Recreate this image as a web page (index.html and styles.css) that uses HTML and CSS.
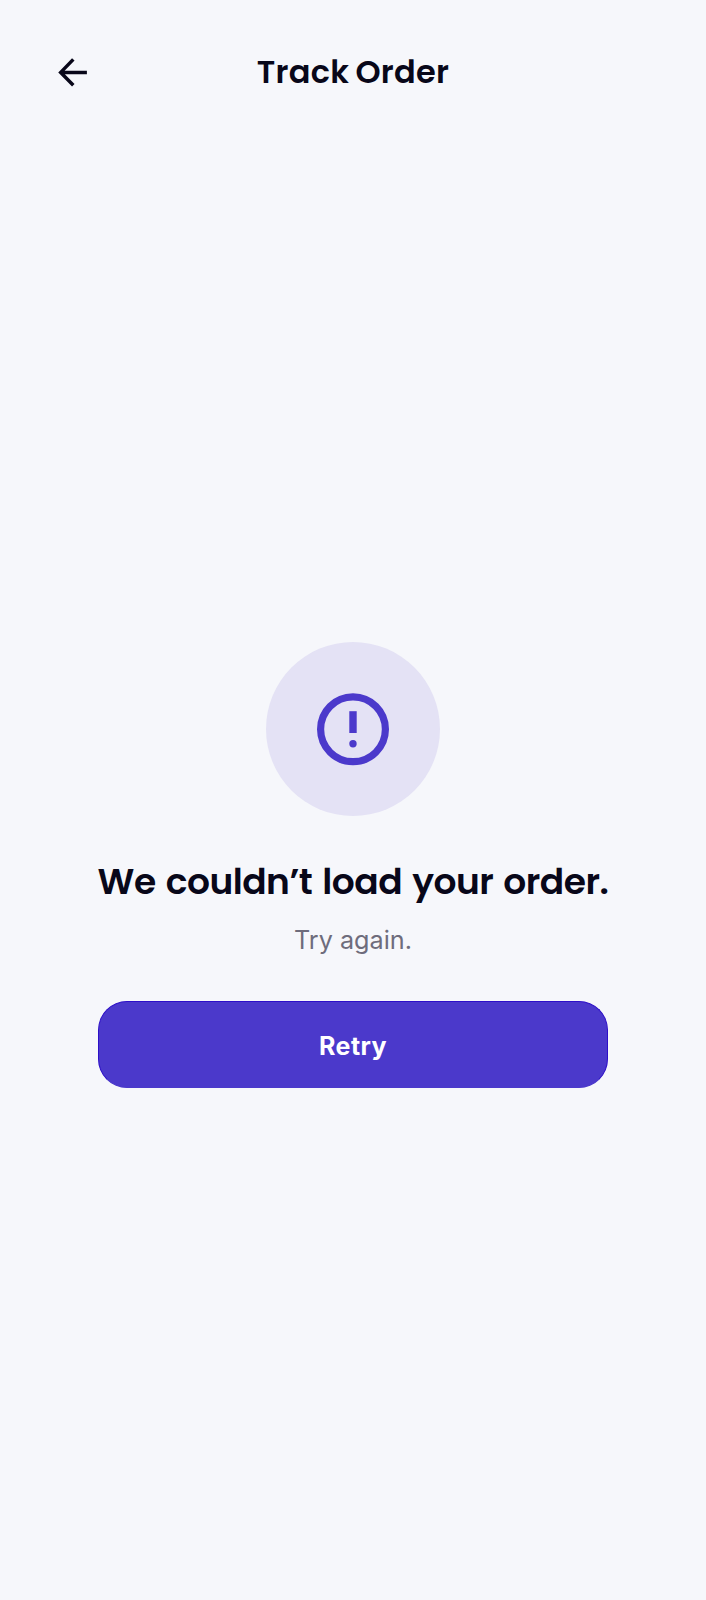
FILE: index.html
```html
<!DOCTYPE html>
<html lang="en">
<head>
<meta charset="utf-8">
<meta name="viewport" content="width=device-width, initial-scale=1">
<title>Track Order</title>
<link rel="stylesheet" href="styles.css">
</head>
<body>
<div class="screen">
  <header class="header">
    <button class="back" aria-label="Back">
      <svg width="32" height="32" viewBox="0 0 32 32" fill="none" stroke="currentColor" stroke-width="3.5"><path d="M17.3 3.4 4.7 16.4l12.6 12.8M4.7 16.4h26.2"/></svg>
    </button>
    <h1 class="title">Track Order</h1>
  </header>
  <main class="state">
    <div class="badge">
      <svg width="74" height="74" viewBox="0 0 74 74"><circle cx="37" cy="37.3" r="32.4" fill="none" stroke="currentColor" stroke-width="7.2"/><path fill="currentColor" d="M33.3 19.2h7.4v21.8h-7.4z"/><circle cx="37" cy="51.7" r="3.7" fill="currentColor"/></svg>
    </div>
    <h2 class="heading">We couldn’t load your order.</h2>
    <p class="hint">Try again.</p>
    <button class="retry">Retry</button>
  </main>
</div>
</body>
</html>
```
FILE: styles.css
```css
* {
  box-sizing: border-box;
}

body {
  margin: 0;
  background: #f6f7fb;
  color: #080719;
  font-family: Inter, "Liberation Sans", sans-serif;
}

.screen {
  display: flex;
  flex-direction: column;
  height: 1600px;
}

.header {
  display: grid;
  grid-template-columns: 58px 1fr 58px;
  align-items: center;
  height: 144px;
  padding: 0 56px;
}

.back {
  display: flex;
  padding: 0;
  border: 0;
  background: none;
  color: inherit;
}

.title,
.heading {
  margin: 0;
  font-family: Poppins, Inter, "Liberation Sans", sans-serif;
  font-weight: 600;
  text-align: center;
  white-space: nowrap;
}

.title {
  font-size: 32px;
  line-height: 44px;
  letter-spacing: 0.25px;
  word-spacing: -1.5px;
}

.state {
  display: flex;
  flex-direction: column;
  align-items: center;
  padding: 498.3px 98px 0;
}

.badge {
  display: grid;
  place-items: center;
  width: 174px;
  height: 174px;
  border-radius: 50%;
  background: #e4e2f5;
  color: #4b39cb;
}

.heading {
  margin-top: 38.7px;
  font-size: 36px;
  line-height: 54px;
  letter-spacing: -0.5px;
  word-spacing: 2px;
}

.hint {
  margin: 12px 0 0;
  color: #6e6c7c;
  font-size: 25.2px;
  line-height: 38px;
}

.retry {
  width: 510px;
  height: 87px;
  margin-top: 42px;
  padding: 4px 0 0;
  border: 1px solid #2d0fc8;
  border-bottom-color: #4b39cb;
  border-radius: 29px;
  background: #4b39cb;
  color: #fff;
  font: 700 25px Inter, "Liberation Sans", sans-serif;
  letter-spacing: 0.4px;
}
```
